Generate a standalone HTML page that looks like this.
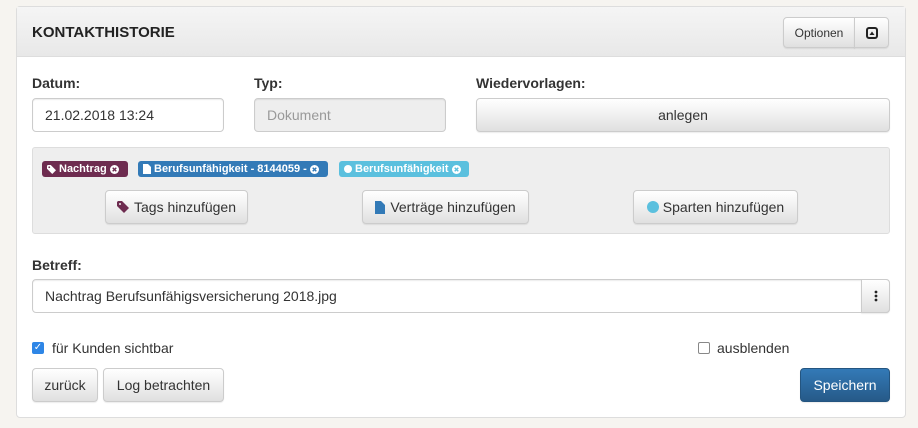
<!DOCTYPE html>
<html><head><meta charset="utf-8"><style>
body{margin:0;width:918px;height:428px;background:#f6f4f0;font-family:"Liberation Sans",sans-serif;color:#333;position:relative;overflow:hidden}
.a{position:absolute;box-sizing:border-box}
.panel{left:16px;top:6px;width:890px;height:412px;background:#fff;border:1px solid #ddd;border-radius:4px}
.head{left:17px;top:7px;width:888px;height:50px;background:linear-gradient(#f5f5f5,#e8e8e8);border-bottom:1px solid #ddd}
.btn{background:linear-gradient(#fff,#e0e0e0);border:1px solid #ccc;border-radius:4px;font-size:14px;display:flex;align-items:center;justify-content:center;color:#333;box-shadow:0 1px 1px rgba(0,0,0,.08)}
.lbl{font-weight:bold;font-size:14px}
.inp{border:1px solid #ccc;border-radius:4px;font-size:14px;padding-left:12px;display:flex;align-items:center;box-shadow:inset 0 1px 1px rgba(0,0,0,.075)}
.tag{height:16px;border-radius:3px;color:#fff;font-size:11px;font-weight:bold;display:flex;align-items:center;padding:0 5px;gap:3px;top:161px;white-space:nowrap}
</style></head><body>
<div class="a panel"></div>
<div class="a head"></div>
<div class="a" style="left:32px;top:24px;font-weight:bold;font-size:15px;color:#222">KONTAKTHISTORIE</div>
<div class="a btn" style="left:783px;top:17px;width:72px;height:31px;font-size:12px;border-radius:4px 0 0 4px">Optionen</div>
<div class="a btn" style="left:854px;top:17px;width:35px;height:31px;border-radius:0 4px 4px 0"><svg width="12" height="12" viewBox="0 0 12 12"><rect x="1" y="1" width="10" height="10" rx="2" fill="none" stroke="#222" stroke-width="2"/><path d="M3.5 8h5L6 4.5z" fill="#222"/></svg></div>
<div class="a lbl" style="left:32px;top:75px">Datum:</div>
<div class="a lbl" style="left:254px;top:75px">Typ:</div>
<div class="a lbl" style="left:476px;top:75px">Wiedervorlagen:</div>
<div class="a inp" style="left:32px;top:98px;width:192px;height:34px">21.02.2018 13:24</div>
<div class="a inp" style="left:254px;top:98px;width:192px;height:34px;background:#eee;color:#999">Dokument</div>
<div class="a btn" style="left:476px;top:98px;width:414px;height:34px">anlegen</div>
<div class="a" style="left:32px;top:147px;width:858px;height:87px;background:#eeeeee;border:1px solid #ddd;border-radius:3px"></div>
<div class="a tag" style="left:42px;width:86px;background:#6e2c50"><svg width="9" height="9" viewBox="0 0 12 12"><path d="M0 1v4l7 7 5-5-7-7H1z" fill="#fff"/><circle cx="3" cy="3" r="1.2" fill="#6e2c50"/></svg>Nachtrag <svg width="9" height="9" viewBox="0 0 10 10"><circle cx="5" cy="5" r="5" fill="#fff"/><path d="M3 3l4 4M7 3l-4 4" stroke="#6e2c50" stroke-width="1.6"/></svg></div>
<div class="a tag" style="left:138px;width:190px;background:#337ab7"><svg width="8" height="10"><path d="M0 0h5l3 3v7H0z" fill="#fff"/></svg>Berufsunfähigkeit - 8144059 - <svg width="9" height="9" viewBox="0 0 10 10"><circle cx="5" cy="5" r="5" fill="#fff"/><path d="M3 3l4 4M7 3l-4 4" stroke="#337ab7" stroke-width="1.6"/></svg></div>
<div class="a tag" style="left:339px;width:130px;background:#5bc0de"><span style="width:8px;height:8px;border-radius:50%;background:#fff;display:inline-block"></span>Berufsunfähigkeit <svg width="9" height="9" viewBox="0 0 10 10"><circle cx="5" cy="5" r="5" fill="#fff"/><path d="M3 3l4 4M7 3l-4 4" stroke="#5bc0de" stroke-width="1.6"/></svg></div>
<div class="a btn" style="left:105px;top:190px;width:143px;height:34px;gap:5px"><svg width="12" height="12" viewBox="0 0 12 12"><path d="M0 1v4l7 7 5-5-7-7H1z" fill="#6e2c50"/><circle cx="3" cy="3" r="1" fill="#eee"/></svg>Tags hinzufügen</div>
<div class="a btn" style="left:362px;top:190px;width:167px;height:34px;gap:5px"><svg width="10" height="13"><path d="M0 0h6l4 4v9H0z" fill="#337ab7"/></svg>Verträge hinzufügen</div>
<div class="a btn" style="left:633px;top:190px;width:165px;height:34px;gap:4px"><span style="width:12px;height:12px;border-radius:50%;background:#5bc0de;display:inline-block"></span>Sparten hinzufügen</div>
<div class="a lbl" style="left:32px;top:257px">Betreff:</div>
<div class="a inp" style="left:32px;top:279px;width:858px;height:34px">Nachtrag Berufsunfähigsversicherung 2018.jpg</div>
<div class="a btn" style="left:861px;top:279px;width:29px;height:34px;border-radius:0 4px 4px 0"><svg width="4" height="12"><circle cx="2" cy="2" r="1.4" fill="#222"/><circle cx="2" cy="6" r="1.4" fill="#222"/><circle cx="2" cy="10" r="1.4" fill="#222"/></svg></div>
<div class="a" style="left:32px;top:342px;width:12px;height:12px;background:#2e86e6;border-radius:2px;color:#fff;font-size:10px;text-align:center;line-height:12px">✓</div>
<div class="a" style="left:52px;top:340px;font-size:14px">für Kunden sichtbar</div>
<div class="a" style="left:698px;top:342px;width:12px;height:12px;border:1px solid #888;border-radius:2px;background:#fff"></div>
<div class="a" style="left:717px;top:340px;font-size:14px">ausblenden</div>
<div class="a btn" style="left:32px;top:368px;width:66px;height:34px">zurück</div>
<div class="a btn" style="left:103px;top:368px;width:121px;height:34px">Log betrachten</div>
<div class="a btn" style="left:800px;top:368px;width:90px;height:34px;background:linear-gradient(#337ab7,#265a88);border-color:#245580;color:#fff">Speichern</div>
</body></html>
